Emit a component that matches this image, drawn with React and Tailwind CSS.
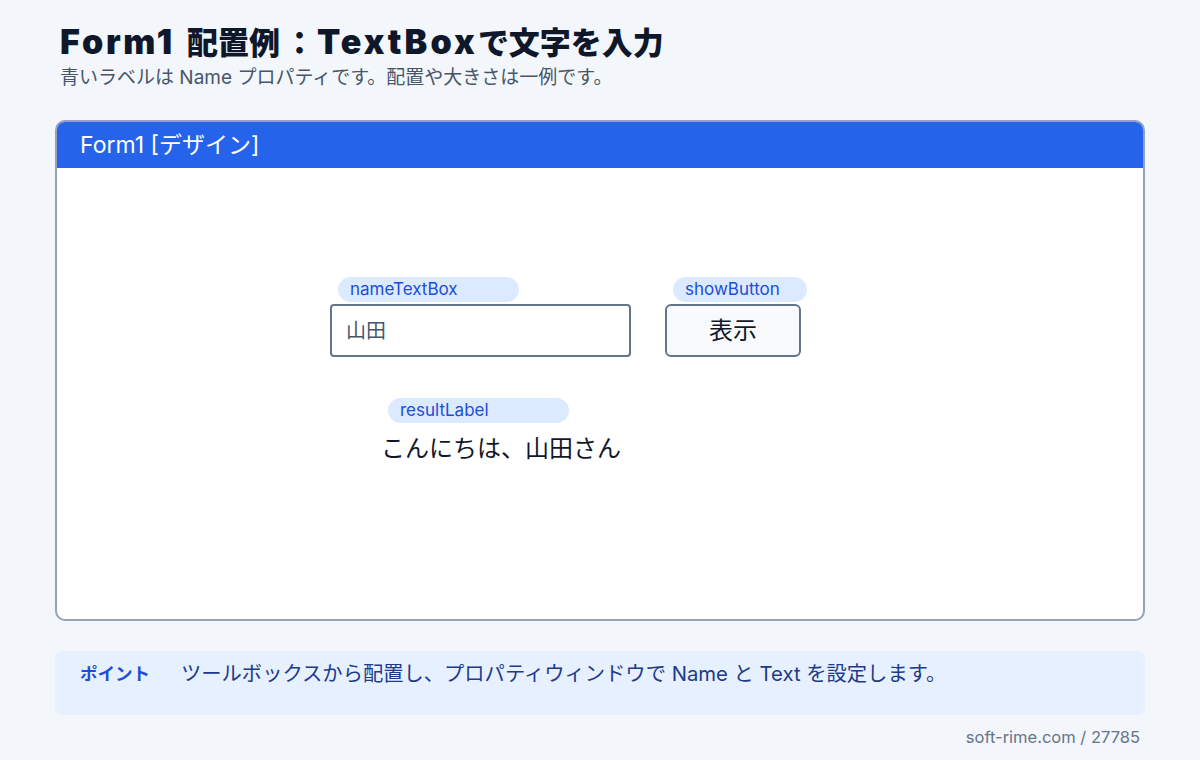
import React from "react";

const font = { fontFamily: '"Inter", "Noto Sans CJK JP", sans-serif' };

const Chip = ({ children, className }) => (
    <div
        className={`absolute h-[25px] rounded-full bg-[#dbeafe] pl-3 text-[17px] leading-[25px] text-[#1d4ed8] ${className}`}
    >
        {children}
    </div>
);

const App = () => {
    return (
        <div
            className="w-[1200px] h-[760px] bg-[#f3f6fb] text-[#0f172a] flex flex-col px-[55px]"
            style={font}
        >
            {/* Heading */}
            <div className="pt-[18px] pl-[5px]">
                <h1 className="h-[48px] flex items-baseline pt-[4px] text-[31px] leading-[40px] font-black text-[#0f172a] whitespace-nowrap">
                    <span className="text-[34px] tracking-[0.08em]">Form1</span>
                    <span className="ml-[12px]">配置例</span>
                    <span className="ml-[4px] mr-[2px]">：</span>
                    <span className="text-[34px] tracking-[0.09em]">TextBox</span>
                    <span>で文字を入力</span>
                </h1>
                <p className="text-[19px] leading-[24px] text-[#475569]">
                    青いラベルは Name プロパティです。配置や大きさは一例です。
                </p>
            </div>

            {/* Designer window */}
            <div className="mt-[30px] h-[501px] rounded-[10px] border-2 border-[#94a3b8] bg-white overflow-hidden flex flex-col">
                <div className="h-[46px] bg-[#2563eb] flex items-center px-[23px] text-white text-[23px]">
                    Form1 [デザイン]
                </div>
                <div className="relative flex-1">
                    <Chip className="left-[281px] top-[109px] w-[181px]">nameTextBox</Chip>
                    <div className="absolute left-[273px] top-[136px] w-[301px] h-[53px] rounded-[4px] border-2 border-[#64748b] bg-white flex items-center pl-[14px] text-[20px] text-[#475569]">
                        山田
                    </div>

                    <Chip className="left-[616px] top-[109px] w-[134px]">showButton</Chip>
                    <div className="absolute left-[608px] top-[136px] w-[136px] h-[53px] rounded-[6px] border-2 border-[#64748b] bg-[#f8fafc] flex items-center justify-center text-[24px] text-[#0f172a]">
                        表示
                    </div>

                    <Chip className="left-[331px] top-[230px] w-[181px]">resultLabel</Chip>
                    <div className="absolute left-[324px] top-[264px] text-[24px] leading-[34px] text-[#0f172a]">
                        こんにちは、山田さん
                    </div>
                </div>
            </div>

            {/* Point */}
            <div className="mt-[30px] h-[64px] rounded-[8px] bg-[#e6f0fe] flex items-start pt-[11px] pl-[25px]">
                <span className="text-[17.5px] leading-[24px] font-bold text-[#1d4ed8] w-[101px]">
                    ポイント
                </span>
                <span className="text-[20.3px] leading-[24px] text-[#1e3a8a]">
                    ツールボックスから配置し、プロパティウィンドウで Name と Text を設定します。
                </span>
            </div>

            {/* Footer */}
            <div className="mt-[12px] text-right pr-[5px] text-[16.5px] leading-[20px] text-[#64748b]">
                soft-rime.com / 27785
            </div>
        </div>
    );
};

export default App;
